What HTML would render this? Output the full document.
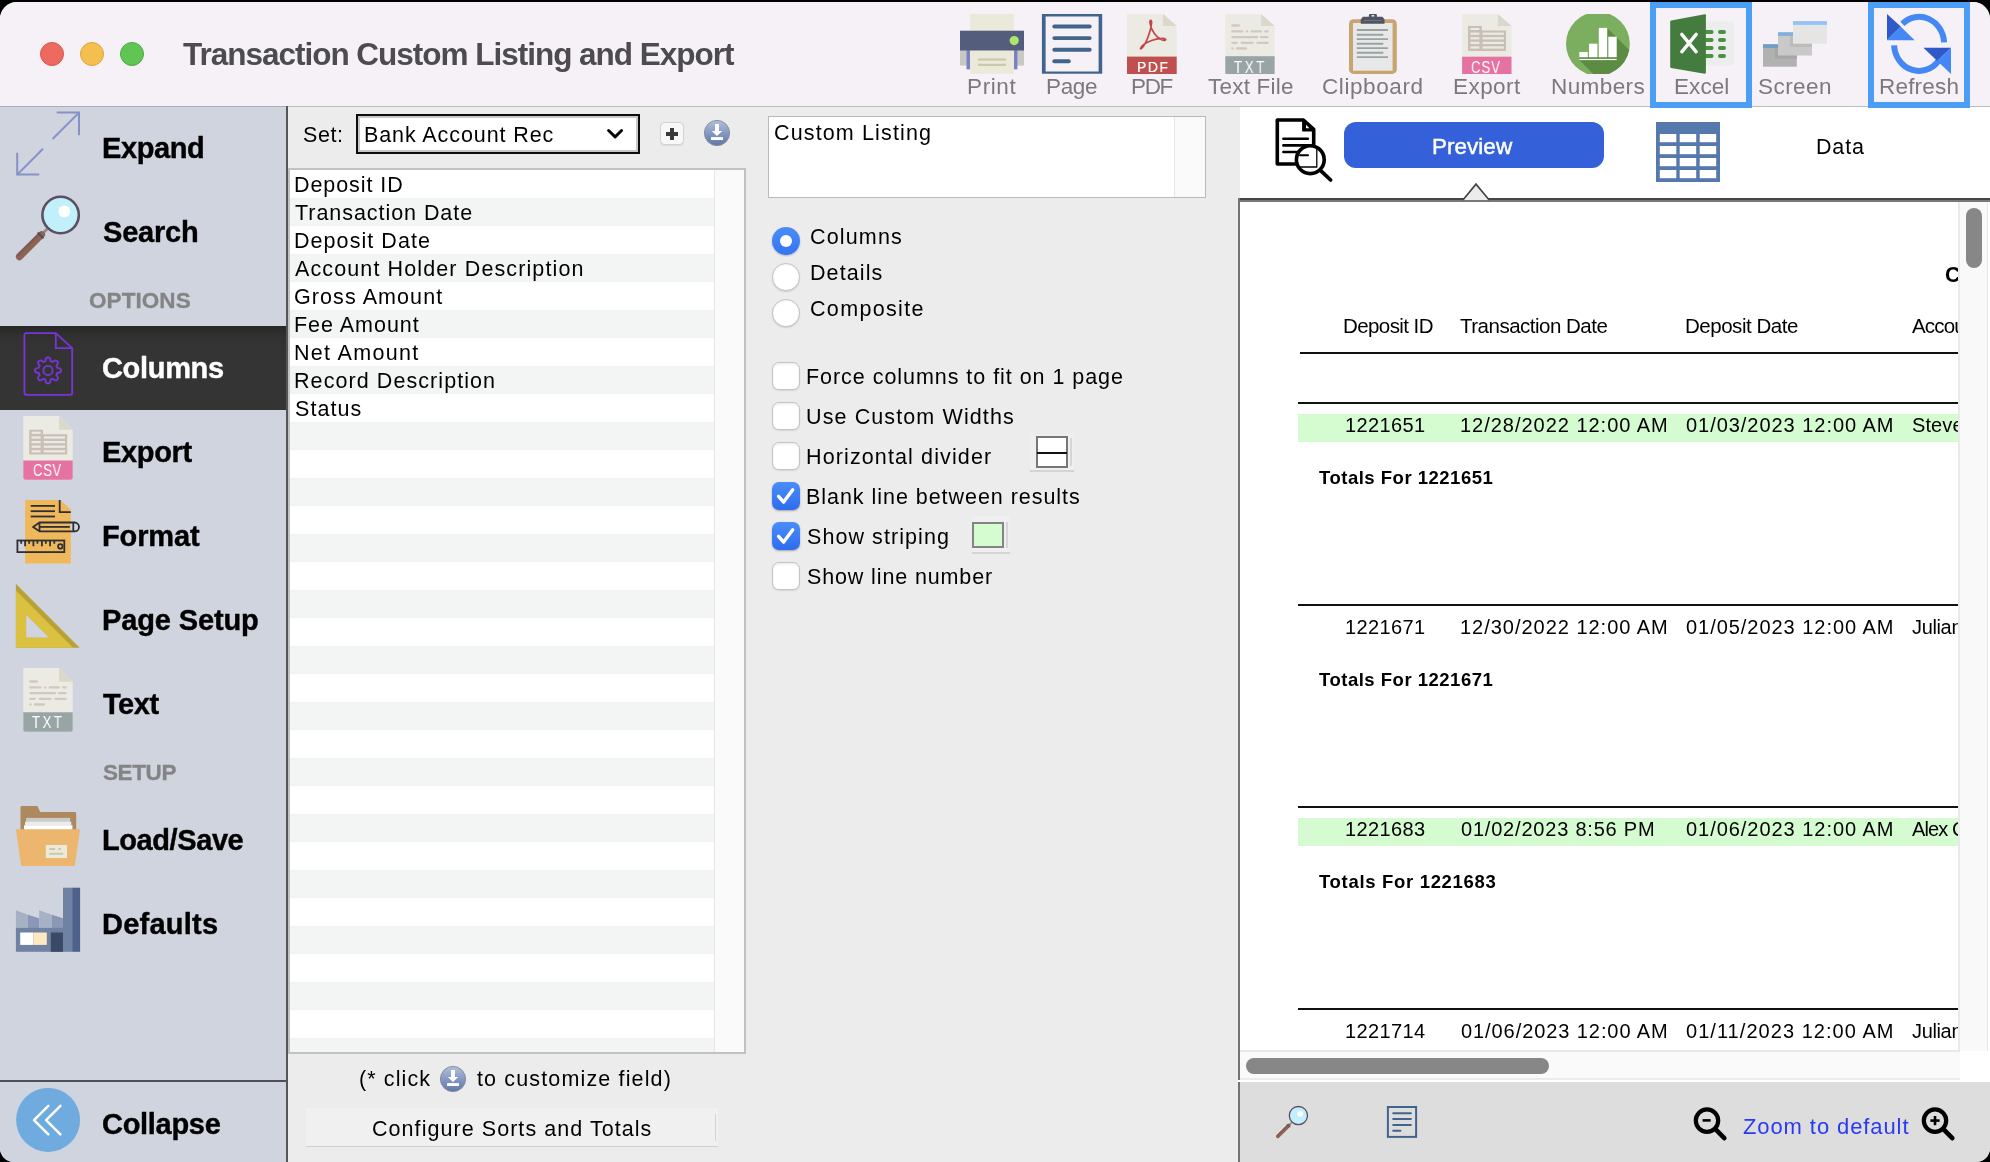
<!DOCTYPE html><html><head><meta charset="utf-8"><title>Transaction Custom Listing and Export</title><style>
*{box-sizing:border-box;margin:0;padding:0}
html,body{width:1990px;height:1162px;overflow:hidden;background:#000;font-family:"Liberation Sans",sans-serif}
#win{position:absolute;left:0;top:2px;width:1990px;height:1160px;background:#ececec;border-radius:17px 17px 14px 14px;overflow:hidden}
#pg{position:absolute;left:0;top:-2px;width:1990px;height:1162px}
.a{position:absolute}
.tx{position:absolute;white-space:nowrap;line-height:1;will-change:transform}
svg{position:absolute;overflow:visible}
.cb{left:772.2px;width:27.4px;height:27.4px;border-radius:7px;background:#fff;border:1px solid #c4c4c4;box-shadow:0 1px 1.5px rgba(0,0,0,.10), inset 0 1.5px 2px rgba(0,0,0,.07)}
.cb.on{background:linear-gradient(#4a8ef8,#2d6cef);border:0;box-shadow:0 1px 2px rgba(0,0,0,.3)}
</style></head><body>
<div id="win"><div id="pg">
<!-- ===== title bar ===== -->
<div class="a" style="left:0;top:0;width:1990px;height:106px;background:#f5f1f7"></div>
<div class="a" style="left:0;top:106px;width:1990px;height:1.2px;background:#bcbbbd"></div>
<div class="a" style="left:40px;top:42px;width:24px;height:24px;border-radius:50%;background:#ed6a5e;border:1px solid #d8564a"></div>
<div class="a" style="left:80px;top:42px;width:24px;height:24px;border-radius:50%;background:#f5bf4f;border:1px solid #dba53a"></div>
<div class="a" style="left:120px;top:42px;width:24px;height:24px;border-radius:50%;background:#61c554;border:1px solid #4daa41"></div>
<!-- toolbar highlight boxes -->
<!--TOOLBAR_ICONS_START-->
<svg style="left:0;top:0" width="1990" height="1162" viewBox="0 0 1990 1162">
<!-- PRINT -->
<g>
<rect x="970" y="14" width="44" height="17" fill="#ebe9d9"/>
<rect x="960" y="50" width="64" height="15.6" fill="#c7c9c6"/>
<rect x="966.5" y="50" width="3.5" height="19.3" fill="#7b80c4"/>
<rect x="1014" y="50" width="3.4" height="19.3" fill="#7b80c4"/>
<rect x="970" y="50" width="44" height="23.8" fill="#ebe9d9"/>
<rect x="960" y="30.7" width="64" height="19.8" fill="#555d7c"/>
<circle cx="1014.2" cy="40.6" r="4.6" fill="#abe66d"/>
<rect x="978" y="58.4" width="28" height="2.2" fill="#cdc9a8"/>
<rect x="978" y="63.8" width="28" height="2.2" fill="#cdc9a8"/>
</g>
<!-- PAGE -->
<g>
<path d="M1041.9 14H1102.2V73.8H1041.9Z M1045.6 16.4V71.6H1098.6V16.4Z" fill="#41648c" fill-rule="evenodd"/>
<g stroke="#41648c" stroke-width="3.9" stroke-linecap="round">
<line x1="1054.3" y1="26.5" x2="1089.7" y2="26.5"/>
<line x1="1054.3" y1="38.1" x2="1089.7" y2="38.1"/>
<line x1="1054.3" y1="49.7" x2="1089.7" y2="49.7"/>
<line x1="1054.3" y1="61.3" x2="1068.8" y2="61.3"/>
</g>
</g>
<!-- PDF -->
<g>
<path d="M1127 14H1163L1176.7 26V74H1127Z" fill="#ebebe3"/>
<path d="M1163 14L1176.7 26H1163Z" fill="#d9d8cb"/>
<rect x="1127" y="56.6" width="49.7" height="17.4" fill="#c0504f"/>
<path d="M1142 48 C1146 44,1151 31,1151.6 23 C1151.8 19.5,1149.6 19.5,1150 23 C1151 31,1157 38,1162 40 C1166.5 41.6,1167 38.4,1163 38.4 C1155 38.4,1147 42,1143.3 45 C1139.6 48,1140 50,1142 48Z" fill="none" stroke="#c2474a" stroke-width="1.7" stroke-linejoin="round"/>
</g>
<!-- TXT -->
<g>
<path d="M1225.3 14H1261.2L1274.6 26V74H1225.3Z" fill="#ebebe3"/>
<path d="M1261.2 14L1274.6 26H1261.2Z" fill="#d9d8cb"/>
<rect x="1225.3" y="56.2" width="49.3" height="17.8" fill="#98a5a4"/>
<g stroke="#d2c7c2" stroke-width="2.3" stroke-linecap="round">
<line x1="1232.4" y1="25.5" x2="1238.9" y2="25.5"/>
<line x1="1232.4" y1="31.4" x2="1242.3" y2="31.4"/><line x1="1247" y1="31.4" x2="1247.2" y2="31.4"/><line x1="1251.8" y1="31.4" x2="1260.8" y2="31.4"/><line x1="1265.3" y1="31.4" x2="1267.6" y2="31.4"/>
<line x1="1232.4" y1="37.1" x2="1257.1" y2="37.1"/><line x1="1261" y1="37.1" x2="1267.6" y2="37.1"/>
<line x1="1232.4" y1="42.8" x2="1236.7" y2="42.8"/><line x1="1241.7" y1="42.8" x2="1252.6" y2="42.8"/><line x1="1257.4" y1="42.8" x2="1267.6" y2="42.8"/>
<line x1="1232.4" y1="48.5" x2="1232.6" y2="48.5"/><line x1="1236.9" y1="48.5" x2="1245.9" y2="48.5"/>
</g>
</g>
<!-- CLIPBOARD -->
<g>
<rect x="1349" y="19.3" width="47.8" height="54.6" rx="4.5" fill="#c7a570"/>
<rect x="1353" y="23" width="39.6" height="47.7" fill="#e8e8e8"/>
<rect x="1368.9" y="14" width="8" height="5" rx="1" fill="#4f5563"/>
<rect x="1371.4" y="15" width="3" height="1.8" rx="0.9" fill="#e8e8ee"/>
<path d="M1362.8 16.8H1382.5L1384.5 19.4V23.8H1360.8V19.4Z" fill="#4f5563"/>
<rect x="1364" y="20" width="17.5" height="1" fill="#6e7481"/>
<g stroke="#9aa3a3" stroke-width="1.9">
<line x1="1356.8" y1="30" x2="1388" y2="30"/><line x1="1356.8" y1="34.7" x2="1383.3" y2="34.7"/>
<line x1="1356.8" y1="39.1" x2="1388" y2="39.1"/><line x1="1356.8" y1="43.7" x2="1383.3" y2="43.7"/>
<line x1="1356.8" y1="48.1" x2="1388" y2="48.1"/><line x1="1356.8" y1="52.7" x2="1383.3" y2="52.7"/>
<line x1="1356.8" y1="57.1" x2="1388" y2="57.1"/>
</g>
</g>
<!-- CSV EXPORT -->
<g id="csvicon">
<path d="M1462.1 14H1497.9L1511.5 26V74H1462.1Z" fill="#ebebe3"/>
<path d="M1497.9 14L1511.5 26H1497.9Z" fill="#d9d8cb"/>
<rect x="1462.1" y="56.7" width="49.4" height="17.3" fill="#e572a0"/>
<path d="M1468 26H1481.8V30.5H1506V51.1H1468Z" fill="#c9beb8"/>
<g fill="#ebebe3">
<rect x="1470.4" y="27.9" width="9" height="2.1"/>
<rect x="1470.4" y="32.6" width="9" height="2.2"/><rect x="1482.6" y="32.6" width="21.3" height="2.2"/>
<rect x="1470.4" y="37.2" width="9" height="2.2"/><rect x="1482.6" y="37.2" width="21.3" height="2.2"/>
<rect x="1470.4" y="41.8" width="9" height="2.2"/><rect x="1482.6" y="41.8" width="21.3" height="2.2"/>
<rect x="1470.4" y="46.4" width="9" height="2.2"/><rect x="1482.6" y="46.4" width="21.3" height="2.2"/>
</g>
</g>
<!-- NUMBERS -->
<g>
<clipPath id="ncl"><rect x="1560" y="14" width="76" height="60"/></clipPath>
<clipPath id="ncc"><circle cx="1597.9" cy="43.8" r="31.9"/></clipPath>
<g clip-path="url(#ncl)">
<circle cx="1597.9" cy="43.8" r="31.9" fill="#7bae5e"/>
<g clip-path="url(#ncc)"><path d="M1607.2 27.9L1650 70.7V95H1614.3L1579.3 60V57.2H1607.2Z" fill="#5c8c43"/></g>
</g>
<g fill="#fff">
<rect x="1579.3" y="52" width="8.5" height="5.2"/>
<rect x="1589" y="43.7" width="8.4" height="13.5"/>
<rect x="1598.8" y="27.9" width="8.4" height="29.3"/>
<rect x="1608.3" y="36.7" width="8.4" height="20.5"/>
<rect x="1579.3" y="58.9" width="37.4" height="1.2"/>
</g>
</g>
<!-- EXCEL -->
<g>
<rect x="1704" y="21.8" width="30.1" height="43.7" rx="2" fill="#eceeed"/>
<g fill="#4e9044">
<rect x="1703" y="30" width="10.6" height="4" rx="2"/><rect x="1718" y="30" width="8" height="4" rx="2"/>
<rect x="1703" y="38" width="10.6" height="4" rx="2"/><rect x="1718" y="38" width="8" height="4" rx="2"/>
<rect x="1703" y="45.9" width="10.6" height="4" rx="2"/><rect x="1718" y="45.9" width="8" height="4" rx="2"/>
<rect x="1703" y="54" width="10.6" height="4" rx="2"/><rect x="1718" y="54" width="8" height="4" rx="2"/>
</g>
<path d="M1671.2 20.5L1704.7 14.3Q1705.9 14.1 1705.9 15.3V72.6Q1705.9 73.9 1704.7 73.7L1671.2 67.9Q1670.2 67.7 1670.2 66.7V21.7Q1670.2 20.7 1671.2 20.5Z" fill="#437c3e"/>
<g stroke="#fbfbfb" stroke-width="3.4" stroke-linecap="round"><line x1="1681.8" y1="34.4" x2="1696.2" y2="51.8"/><line x1="1696.2" y1="34.4" x2="1681.8" y2="51.8"/></g>
</g>
<!-- SCREEN -->
<g>
<rect x="1763" y="44.3" width="33.8" height="22.4" fill="#b1b1b1"/>
<rect x="1763" y="44.3" width="33.8" height="3.6" fill="#6f9fc9"/>
<rect x="1775" y="48" width="21.8" height="10.5" fill="#a6a6a6"/>
<rect x="1778" y="32.3" width="34" height="23.2" fill="#c9c9c9"/>
<rect x="1778" y="32.3" width="34" height="3.6" fill="#7fb0dd"/>
<rect x="1790" y="36" width="22" height="11" fill="#bcbcbc"/>
<rect x="1793" y="21.1" width="34" height="22.6" fill="#e5e5e5"/>
<rect x="1793" y="21.1" width="34" height="3.8" fill="#93c4f5"/>
</g>
<!-- REFRESH -->
<g>
<path d="M1902.4 23.8A25 27 0 0 1 1944.1 42.3" fill="none" stroke="#4587f5" stroke-width="6"/>
<path d="M1894.1 45.3A25 27 0 0 0 1938.8 60.5" fill="none" stroke="#4587f5" stroke-width="6"/>
<path d="M1887 13.9V40.2L1900.8 26.6Z" fill="#3059c8"/>
<path d="M1887 40.2H1914.7L1900.6 26.6Z" fill="#4587f5"/>
<path d="M1923.4 47.7H1951L1937.3 61Z" fill="#3059c8"/>
<path d="M1951 47.7V74L1937.3 61Z" fill="#4587f5"/>
</g>
</svg>
<!--TOOLBAR_ICONS_END-->

<!-- ===== sidebar ===== -->
<div class="a" style="left:0;top:106px;width:286px;height:1056px;background:#d0d4de"></div>
<div class="a" style="left:0;top:106px;width:286px;height:1px;background:#a9afba"></div>
<div class="a" style="left:0;top:326px;width:286px;height:84px;background:linear-gradient(#282828,#323232 14%,#343434 30%,#343434)"></div>
<div class="a" style="left:0;top:1080px;width:286px;height:2px;background:#4f4f54"></div>
<div class="a" style="left:286px;top:106px;width:2px;height:1056px;background:#555"></div>


<!-- ===== mid panel ===== -->
<div class="a" style="left:288px;top:107px;width:952px;height:1055px;background:#ececec"></div>
<!-- select -->
<div class="a" style="left:356px;top:114px;width:284px;height:40px;background:#fff;border:2px solid #0c0c0c"></div>
<div class="a" style="left:358px;top:116px;width:280px;height:36px;border:2px solid #c8c8c8"></div>
<svg style="left:604px;top:126px" width="24" height="16" viewBox="0 0 24 16"><path d="M4.6 4.5 L11.1 10.9 L17.6 4.5" fill="none" stroke="#0a0a0a" stroke-width="3" stroke-linecap="round" stroke-linejoin="round"/></svg>
<!-- plus button -->
<div class="a" style="left:660.3px;top:122.3px;width:23.3px;height:23.1px;background:#f7f7f7;border:1px solid #d2d2d2;border-radius:4.5px;box-shadow:0 1px 1.5px rgba(0,0,0,.08)"></div>
<div class="a" style="left:666px;top:132.1px;width:12px;height:3.9px;background:#383838"></div>
<div class="a" style="left:670.1px;top:128.1px;width:3.9px;height:11.8px;background:#383838"></div>
<!-- download circle -->
<svg style="left:703px;top:119px" width="28" height="28" viewBox="0 0 28 28"><defs><linearGradient id="dg" x1="0" y1="0" x2="0" y2="1"><stop offset="0" stop-color="#b3c0db"/><stop offset="0.5" stop-color="#8499c3"/><stop offset="1" stop-color="#5d78ad"/></linearGradient></defs><circle cx="14" cy="14" r="12.6" fill="url(#dg)" stroke="#8b8e96" stroke-width="1"/><path d="M12 5.1h4v6.8h3.2L14 17.1 8.8 11.9h3.2z" fill="#fff"/><rect x="8" y="18.1" width="12" height="2.9" fill="#fff"/></svg>
<!-- list box -->
<div class="a" style="left:288px;top:168px;width:458px;height:886px;border:2px solid #c2c2c2;background:#fff;overflow:hidden">
  <div class="a" style="left:0;top:0;width:424px;height:900px;background:repeating-linear-gradient(#fff 0,#fff 28px,#f3f5f5 28px,#f3f5f5 56px)"></div>
  <div class="a" style="left:424px;top:0;width:30px;height:900px;background:#fafafa;border-left:1px solid #e6e6e6"></div>
</div>
<!-- custom listing textarea -->
<div class="a" style="left:768px;top:116px;width:438px;height:82px;background:#fff;border:1px solid #b9b9b9"></div>
<div class="a" style="left:1174px;top:117px;width:31px;height:80px;background:#fafafa;border-left:1px solid #e6e6e6"></div>
<!-- radios -->
<div class="a" style="left:772px;top:227px;width:28px;height:28px;border-radius:50%;background:linear-gradient(#4a8df8,#3275ef);box-shadow:0 1px 2px rgba(0,0,80,.22)"></div>
<div class="a" style="left:779.8px;top:234.8px;width:12.4px;height:12.4px;border-radius:50%;background:#fff"></div>
<div class="a" style="left:772px;top:263px;width:27.6px;height:27.6px;border-radius:50%;background:#fff;border:1px solid #c3c3c3;box-shadow:0 1px 1.5px rgba(0,0,0,.12), inset 0 1px 2px rgba(0,0,0,.06)"></div>
<div class="a" style="left:772px;top:299.2px;width:27.6px;height:27.6px;border-radius:50%;background:#fff;border:1px solid #c3c3c3;box-shadow:0 1px 1.5px rgba(0,0,0,.12), inset 0 1px 2px rgba(0,0,0,.06)"></div>
<!-- checkboxes -->
<div class="a cb" style="top:362.2px"></div>
<div class="a cb" style="top:402.2px"></div>
<div class="a cb" style="top:442.2px"></div>
<div class="a cb on" style="top:482.2px"></div>
<div class="a cb on" style="top:522.2px"></div>
<div class="a cb" style="top:562.2px"></div>
<svg style="left:772.2px;top:482.4px" width="27.5" height="27.5" viewBox="0 0 26 26"><path d="M6.2 13.6 L11 19 L19.6 7.4" fill="none" stroke="#fff" stroke-width="3.2" stroke-linecap="round" stroke-linejoin="round"/></svg>
<svg style="left:772.2px;top:522.4px" width="27.5" height="27.5" viewBox="0 0 26 26"><path d="M6.2 13.6 L11 19 L19.6 7.4" fill="none" stroke="#fff" stroke-width="3.2" stroke-linecap="round" stroke-linejoin="round"/></svg>
<!-- divider swatch -->
<div class="a" style="left:1030px;top:434px;width:44px;height:38px;background:#efefef;border-bottom:2px solid #d4d4d4"></div>
<div class="a" style="left:1070px;top:438px;width:2px;height:28px;background:#d6d6d6"></div>
<div class="a" style="left:1036px;top:436px;width:32px;height:32px;background:#fff;border:2px solid #777"></div>
<div class="a" style="left:1037px;top:451.5px;width:30px;height:2px;background:#111"></div>
<!-- stripe swatch -->
<div class="a" style="left:972px;top:516px;width:38px;height:38px;background:#efefef;border-bottom:2px solid #d4d4d4"></div>
<div class="a" style="left:1006px;top:522px;width:2px;height:26px;background:#d6d6d6"></div>
<div class="a" style="left:972px;top:522px;width:32px;height:26px;background:#d5fbd0;border:2px solid #848484"></div>
<!-- click-to-customize circle -->
<svg style="left:439px;top:1065px" width="28" height="28" viewBox="0 0 28 28"><circle cx="14" cy="14" r="12.6" fill="url(#dg)" stroke="#8b8e96" stroke-width="1"/><path d="M12 5.1h4v6.8h3.2L14 17.1 8.8 11.9h3.2z" fill="#fff"/><rect x="8" y="18.1" width="12" height="2.9" fill="#fff"/></svg>
<!-- configure button -->
<div class="a" style="left:306px;top:1108px;width:412px;height:39px;background:#f0f0f0;border-bottom:1.5px solid #cfcfcf"></div>
<div class="a" style="left:714.5px;top:1114px;width:1.5px;height:27px;background:#d4d4d4"></div>

<!-- ===== right panel ===== -->
<div class="a" style="left:1240px;top:107px;width:750px;height:92px;background:#fff"></div>
<div class="a" style="left:1240px;top:200px;width:750px;height:882px;background:#fff"></div>
<!-- preview button -->
<div class="a" style="left:1344px;top:122px;width:260px;height:46px;border-radius:12px;background:#3461d9"></div>
<!--RIGHT_ICONS-->
<!-- preview content -->
<div class="a" id="pv" style="left:1240px;top:201px;width:718px;height:849px;overflow:hidden;background:#fff">

<div class="a" style="left:60px;top:151px;width:700px;height:2px;background:#111"></div>
<div class="a" style="left:58px;top:201px;width:700px;height:2px;background:#111"></div>
<div class="a" style="left:58px;top:403px;width:700px;height:2px;background:#111"></div>
<div class="a" style="left:58px;top:605px;width:700px;height:2px;background:#111"></div>
<div class="a" style="left:58px;top:807px;width:700px;height:2px;background:#111"></div>
<div class="a" style="left:58px;top:213px;width:700px;height:28px;background:#d5fbd0"></div>
<div class="a" style="left:58px;top:617px;width:700px;height:28px;background:#d5fbd0"></div>
<div class="tx" id="t55" style="left:705.00px;top:64.0px;font-size:21.5px;font-weight:700;color:#000;letter-spacing:0.300px;">Custom Listing</div>
<div class="tx" id="t56" style="left:102.80px;top:115.0px;font-size:20.5px;font-weight:400;color:#000;letter-spacing:-0.579px;">Deposit ID</div>
<div class="tx" id="t57" style="left:220.20px;top:115.0px;font-size:20.5px;font-weight:400;color:#000;letter-spacing:-0.503px;">Transaction Date</div>
<div class="tx" id="t58" style="left:445.40px;top:115.0px;font-size:20.5px;font-weight:400;color:#000;letter-spacing:-0.474px;">Deposit Date</div>
<div class="tx" id="t59" style="left:672.10px;top:115.0px;font-size:20.5px;font-weight:400;color:#000;letter-spacing:-0.800px;">Account Holder Description</div>
<div class="tx" id="t60" style="left:104.60px;top:214.0px;font-size:20px;font-weight:400;color:#000;letter-spacing:0.391px;">1221651</div>
<div class="tx" id="t61" style="left:220.30px;top:214.0px;font-size:20px;font-weight:400;color:#000;letter-spacing:0.978px;">12/28/2022 12:00 AM</div>
<div class="tx" id="t62" style="left:446.40px;top:214.0px;font-size:20px;font-weight:400;color:#000;letter-spacing:0.961px;">01/03/2023 12:00 AM</div>
<div class="tx" id="t63" style="left:672.20px;top:214.0px;font-size:20px;font-weight:400;color:#000;letter-spacing:0.100px;">Steve Morales</div>
<div class="tx" id="t64" style="left:78.80px;top:268.0px;font-size:18.5px;font-weight:700;color:#000;letter-spacing:0.504px;">Totals For 1221651</div>
<div class="tx" id="t65" style="left:104.60px;top:416.0px;font-size:20px;font-weight:400;color:#000;letter-spacing:0.391px;">1221671</div>
<div class="tx" id="t66" style="left:220.30px;top:416.0px;font-size:20px;font-weight:400;color:#000;letter-spacing:0.978px;">12/30/2022 12:00 AM</div>
<div class="tx" id="t67" style="left:446.40px;top:416.0px;font-size:20px;font-weight:400;color:#000;letter-spacing:0.961px;">01/05/2023 12:00 AM</div>
<div class="tx" id="t68" style="left:672.20px;top:416.0px;font-size:20px;font-weight:400;color:#000;letter-spacing:-0.350px;">Julian Ortega</div>
<div class="tx" id="t69" style="left:78.80px;top:470.0px;font-size:18.5px;font-weight:700;color:#000;letter-spacing:0.504px;">Totals For 1221671</div>
<div class="tx" id="t70" style="left:104.60px;top:618.0px;font-size:20px;font-weight:400;color:#000;letter-spacing:0.391px;">1221683</div>
<div class="tx" id="t71" style="left:221.30px;top:618.0px;font-size:20px;font-weight:400;color:#000;letter-spacing:0.795px;">01/02/2023 8:56 PM</div>
<div class="tx" id="t72" style="left:446.40px;top:618.0px;font-size:20px;font-weight:400;color:#000;letter-spacing:0.961px;">01/06/2023 12:00 AM</div>
<div class="tx" id="t73" style="left:672.20px;top:618.0px;font-size:20px;font-weight:400;color:#000;letter-spacing:-0.900px;">Alex Carter</div>
<div class="tx" id="t74" style="left:78.80px;top:672.0px;font-size:18.5px;font-weight:700;color:#000;letter-spacing:0.681px;">Totals For 1221683</div>
<div class="tx" id="t75" style="left:104.60px;top:820.0px;font-size:20px;font-weight:400;color:#000;letter-spacing:0.391px;">1221714</div>
<div class="tx" id="t76" style="left:221.30px;top:820.0px;font-size:20px;font-weight:400;color:#000;letter-spacing:0.922px;">01/06/2023 12:00 AM</div>
<div class="tx" id="t77" style="left:446.40px;top:820.0px;font-size:20px;font-weight:400;color:#000;letter-spacing:1.044px;">01/11/2023 12:00 AM</div>
<div class="tx" id="t78" style="left:672.20px;top:820.0px;font-size:20px;font-weight:400;color:#000;letter-spacing:-0.350px;">Julian Ortega</div>
</div>
<!-- v scroll -->
<div class="a" style="left:1958px;top:202px;width:30px;height:849px;background:#f9f9f9;border-left:2px solid #e9e9e9;border-right:1px solid #e6e6e6"></div>
<div class="a" style="left:1966px;top:208px;width:16px;height:60px;border-radius:8px;background:#878787"></div>
<!-- h scroll -->
<div class="a" style="left:1240px;top:1050px;width:720px;height:30px;background:#fafafa;border-top:2px solid #e8e8e8;border-bottom:2px solid #ececec"></div>
<div class="a" style="left:1246px;top:1058px;width:303px;height:16px;border-radius:8px;background:#878787"></div>
<!-- bottom bar -->
<div class="a" style="left:1240px;top:1082px;width:750px;height:80px;background:#dddddd"></div>
<!-- tab line + triangle -->
<div class="a" style="left:1238px;top:198px;width:752px;height:2px;background:#464646"></div>
<div class="a" style="left:1238px;top:200px;width:752px;height:2px;background:#787878"></div>
<div class="a" style="left:1238px;top:198px;width:2px;height:964px;background:#737373"></div>
<div class="a" style="left:1238px;top:1080px;width:752px;height:2px;background:#fff"></div>
<svg style="left:1458px;top:180px" width="36" height="22" viewBox="0 0 36 22"><path d="M5.4 20 L18 4.4 L30.8 20Z" fill="#ececec"/><path d="M4.9 20 L18 4.2 L31.2 20" fill="none" stroke="#464646" stroke-width="1.7" stroke-linejoin="miter"/></svg>
<!--SIDEBAR_ICONS_START-->
<svg style="left:0;top:0" width="1990" height="1162" viewBox="0 0 1990 1162">
<defs>
<g id="mag">
  <!-- search magnifier, lens centre at 0,0 ; r=19.5 -->
  <line x1="-13.4" y1="14" x2="-17.6" y2="18" stroke="#8e8e96" stroke-width="3"/>
  <line x1="-19" y1="19.6" x2="-41.2" y2="41.8" stroke="#8f6350" stroke-width="7" stroke-linecap="round"/>
  <line x1="-20.6" y1="18" x2="-42.8" y2="40.2" stroke="#7b5b5c" stroke-width="2.4" stroke-linecap="round"/>
  <line x1="-23" y1="17.6" x2="-17.2" y2="23.4" stroke="#4f4a5f" stroke-width="2"/>
  <circle cx="0" cy="0" r="18.2" fill="#c1f0fb" stroke="#5a4f63" stroke-width="2.6"/>
  <circle cx="3.7" cy="-3.5" r="5.9" fill="#fff"/>
</g>
</defs>
<!-- EXPAND -->
<g fill="none" stroke="#8592c9" stroke-width="2">
<path d="M56.7 112.6H79V135.2"/><line x1="79" y1="112.6" x2="52.6" y2="139"/>
<path d="M17.2 152.8V174.6H39.2"/><line x1="17.2" y1="174.6" x2="43" y2="148.8"/>
</g>
<!-- SEARCH -->
<use href="#mag" transform="translate(60.6,215)"/>
<!-- COLUMNS icon -->
<g fill="none" stroke="#7a35d6" stroke-width="1.8" stroke-linejoin="round">
<path d="M26.4 333.2H55.8L72.2 348.2V392.8Q72.2 394.8 70.2 394.8H26.4Q24.4 394.8 24.4 392.8V335.2Q24.4 333.2 26.4 333.2Z"/>
<path d="M55.8 333.2V348.2H72.2"/>
<circle cx="48" cy="370.4" r="4.6"/>
<path d="M45.51 361.13L45.40 360.64Q45.53 357.54 48.00 357.25Q50.47 357.54 50.60 360.64L50.49 361.13A9.60 9.60 0 0 1 52.79 362.08L52.79 362.08L53.07 361.66Q55.35 359.55 57.30 361.10Q58.85 363.05 56.74 365.33L56.32 365.61A9.60 9.60 0 0 1 57.27 367.91L57.27 367.91L57.76 367.80Q60.86 367.93 61.15 370.40Q60.86 372.87 57.76 373.00L57.27 372.89A9.60 9.60 0 0 1 56.32 375.19L56.32 375.19L56.74 375.47Q58.85 377.75 57.30 379.70Q55.35 381.25 53.07 379.14L52.79 378.72A9.60 9.60 0 0 1 50.49 379.67L50.49 379.67L50.60 380.16Q50.47 383.26 48.00 383.55Q45.53 383.26 45.40 380.16L45.51 379.67A9.60 9.60 0 0 1 43.21 378.72L43.21 378.72L42.93 379.14Q40.65 381.25 38.70 379.70Q37.15 377.75 39.26 375.47L39.68 375.19A9.60 9.60 0 0 1 38.73 372.89L38.73 372.89L38.24 373.00Q35.14 372.87 34.85 370.40Q35.14 367.93 38.24 367.80L38.73 367.91A9.60 9.60 0 0 1 39.68 365.61L39.68 365.61L39.26 365.33Q37.15 363.05 38.70 361.10Q40.65 359.55 42.93 361.66L43.21 362.08A9.60 9.60 0 0 1 45.51 361.13Z"/>
</g>
<!-- CSV (sidebar) -->
<g>
<path d="M23.3 416H59.1L72.7 429.8V477.8Q72.7 479.8 70.7 479.8H25.3Q23.3 479.8 23.3 477.8Z" fill="#ebebe3"/>
<path d="M59.1 416L72.7 429.8H59.1Z" fill="#d9d8cb"/>
<path d="M23.3 460.6H72.7V477.8Q72.7 479.8 70.7 479.8H25.3Q23.3 479.8 23.3 477.8Z" fill="#e572a0"/>
<path d="M29.2 429.8H43V434.3H67.2V454.6H29.2Z" fill="#c9beb8"/>
<g fill="#ebebe3">
<rect x="31.6" y="431.7" width="9" height="2.1"/>
<rect x="31.6" y="436.4" width="9" height="2.2"/><rect x="43.8" y="436.4" width="21.3" height="2.2"/>
<rect x="31.6" y="441" width="9" height="2.2"/><rect x="43.8" y="441" width="21.3" height="2.2"/>
<rect x="31.6" y="445.6" width="9" height="2.2"/><rect x="43.8" y="445.6" width="21.3" height="2.2"/>
<rect x="31.6" y="450.2" width="9" height="2.2"/><rect x="43.8" y="450.2" width="21.3" height="2.2"/>
</g>
</g>
<!-- FORMAT -->
<g>
<path d="M25.1 499.9H60.6L70.8 509.7V563.6H25.1Z" fill="#efb95b"/>
<g fill="none" stroke="#2e2e36" stroke-width="1.8">
<path d="M59.7 499.9V512.1H70.8"/>
<line x1="30.7" y1="505.9" x2="55" y2="505.9"/><line x1="30.7" y1="511.2" x2="55" y2="511.2"/><line x1="30.7" y1="516.5" x2="55" y2="516.5"/>
<path d="M39.5 522.5H74.6A4.4 4.4 0 0 1 74.6 531.3H39.5L33 526.9Z" stroke-linejoin="round"/>
<line x1="39.5" y1="522.5" x2="39.5" y2="531.3"/>
<line x1="39.5" y1="526.9" x2="69.8" y2="526.9"/>
<line x1="73.3" y1="522.5" x2="73.3" y2="531.3"/>
<rect x="17.4" y="540.5" width="46.9" height="11.6"/>
<path d="M21.2 540.5V543.8M25.1 540.5V546.2M29.2 540.5V543.8M33.4 540.5V546.2M37.4 540.5V543.8M41.9 540.5V546.2M45.8 540.5V543.8M50.1 540.5V546.2M54.3 540.5V543.8"/>
<circle cx="60.3" cy="546.4" r="2.2"/>
</g>
</g>
<!-- PAGE SETUP -->
<g>
<path d="M15.9 583.8V647.7H79.7Z M26.1 614.4L49.4 637.7H26.1Z" fill="#b7a238" fill-rule="evenodd"/>
<path d="M15.9 590.6V647.7H73.1Z M26.1 614.4L49.4 637.7H26.1Z" fill="#dcc140" fill-rule="evenodd"/>
</g>
<!-- TEXT (sidebar) -->
<g>
<path d="M23.3 668H59.1L72.7 681.8V729.8Q72.7 731.8 70.7 731.8H25.3Q23.3 731.8 23.3 729.8Z" fill="#ebebe3"/>
<path d="M59.1 668L72.7 681.8H59.1Z" fill="#d9d8cb"/>
<path d="M23.3 712.2H72.7V729.8Q72.7 731.8 70.7 731.8H25.3Q23.3 731.8 23.3 729.8Z" fill="#98a5a4"/>
<g stroke="#d2c7c2" stroke-width="2.3" stroke-linecap="round" transform="translate(-1202,656)">
<line x1="1232.4" y1="25.5" x2="1238.9" y2="25.5"/>
<line x1="1232.4" y1="31.4" x2="1242.3" y2="31.4"/><line x1="1247" y1="31.4" x2="1247.2" y2="31.4"/><line x1="1251.8" y1="31.4" x2="1260.8" y2="31.4"/><line x1="1265.3" y1="31.4" x2="1267.6" y2="31.4"/>
<line x1="1232.4" y1="37.1" x2="1257.1" y2="37.1"/><line x1="1261" y1="37.1" x2="1267.6" y2="37.1"/>
<line x1="1232.4" y1="42.8" x2="1236.7" y2="42.8"/><line x1="1241.7" y1="42.8" x2="1252.6" y2="42.8"/><line x1="1257.4" y1="42.8" x2="1267.6" y2="42.8"/>
<line x1="1232.4" y1="48.5" x2="1232.6" y2="48.5"/><line x1="1236.9" y1="48.5" x2="1245.9" y2="48.5"/>
</g>
</g>
<!-- LOAD/SAVE -->
<g>
<path d="M20.5 806.9Q20.5 805.9 21.5 805.9H37.4L40.2 811.9H75.2Q76.2 811.9 76.2 812.9V830H20.5Z" fill="#ae8960"/>
<rect x="26.1" y="817.9" width="44" height="4" fill="#c9cccd"/>
<rect x="25.1" y="821.6" width="46.1" height="4" fill="#e8edee"/>
<rect x="24" y="825.3" width="48.4" height="4.6" fill="#fff"/>
<path d="M15.9 829.2H80.1L74.8 865.9H21.2Z" fill="#ecb66f"/>
<rect x="45.8" y="845" width="21.2" height="13" fill="#ebe9d9"/>
<g stroke="#cdc9a8" stroke-width="2"><line x1="49.4" y1="849" x2="55" y2="849"/><line x1="58.3" y1="849" x2="60.9" y2="849"/><line x1="49.4" y1="853.8" x2="63.2" y2="853.8"/></g>
</g>
<!-- DEFAULTS (factory) -->
<g>
<rect x="63" y="887.7" width="9.3" height="64.1" fill="#7082a3"/>
<rect x="72.2" y="887.7" width="7.9" height="64.1" fill="#4e618a"/>
<path d="M15.9 910.2L27.9 914.8V928H15.9Z" fill="#a6b1c6"/>
<path d="M27.9 914.8L39.2 918.3V928H27.9Z" fill="#8a98b5"/>
<path d="M39.2 910.2L51.9 914.8V928H39.2Z" fill="#a6b1c6"/>
<path d="M51.9 914.8L63 918.3V928H51.9Z" fill="#8a98b5"/>
<rect x="15.9" y="927.9" width="47.1" height="23.9" fill="#6f82a4"/>
<rect x="20.2" y="932.5" width="13.1" height="12.4" fill="#fff"/>
<rect x="33.3" y="932.5" width="13.5" height="12.4" fill="#fce9c3"/>
<rect x="50.8" y="932.5" width="12.2" height="19.3" fill="#3a4a66"/>
</g>
<!-- COLLAPSE -->
<circle cx="48.1" cy="1119.9" r="32" fill="#6fabde"/>
<g fill="none" stroke="#fff" stroke-width="2.5" stroke-linecap="round" stroke-linejoin="round">
<path d="M48.3 1105.9L34 1120.1L48.3 1134.4"/><path d="M60.4 1105.9L46.1 1120.1L60.4 1134.4"/>
</g>

<!-- ===== RIGHT PANEL ICONS ===== -->
<!-- preview doc+magnifier -->
<g fill="none" stroke="#000" stroke-linejoin="round" stroke-linecap="round">
<path d="M1277.3 120H1303.4L1313.7 129.4V164H1277.3Z" stroke-width="3.6"/>
<path d="M1303.3 120V130.4H1313.7L1303.4 120Z" fill="#000" stroke-width="2.4"/>
<path d="M1306 124.8V128.2H1309.4Z" fill="#fff" stroke="none"/>
<g stroke-width="2.6"><line x1="1283.4" y1="138.7" x2="1307.8" y2="138.7"/><line x1="1283.4" y1="145.4" x2="1307.8" y2="145.4"/><line x1="1283.4" y1="152" x2="1300" y2="152"/></g>
<circle cx="1310.3" cy="159.7" r="13.9" fill="#fff" stroke-width="3.6"/>
<line x1="1300" y1="155.2" x2="1308" y2="155.2" stroke-width="2"/>
<clipPath id="lens"><circle cx="1310.3" cy="159.7" r="13.9"/></clipPath>
<path d="M1316.8 140V167H1296" clip-path="url(#lens)" stroke-width="1.3" stroke-linecap="butt"/>
<line x1="1321" y1="170.8" x2="1330.6" y2="180" stroke-width="3.8"/>
</g>
<!-- table icon -->
<g>
<rect x="1656" y="122" width="64" height="60" fill="#5579ad"/>
<g fill="#fff">
<rect x="1659.8" y="134" width="16.5" height="8.2"/><rect x="1679.7" y="134" width="16.5" height="8.2"/><rect x="1699.7" y="134" width="16.5" height="8.2"/>
<rect x="1659.8" y="146" width="16.5" height="8.2"/><rect x="1679.7" y="146" width="16.5" height="8.2"/><rect x="1699.7" y="146" width="16.5" height="8.2"/>
<rect x="1659.8" y="158" width="16.5" height="8.2"/><rect x="1679.7" y="158" width="16.5" height="8.2"/><rect x="1699.7" y="158" width="16.5" height="8.2"/>
<rect x="1659.8" y="170" width="16.5" height="8.2"/><rect x="1679.7" y="170" width="16.5" height="8.2"/><rect x="1699.7" y="170" width="16.5" height="8.2"/>
</g>
</g>
<!-- bottom bar: small magnifier -->
<use href="#mag" transform="translate(1298.4,1115.6) scale(0.5)"/>
<!-- bottom bar: page icon -->
<g>
<rect x="1387.9" y="1107" width="28.2" height="29.9" fill="none" stroke="#41648c" stroke-width="2"/>
<g stroke="#41648c" stroke-width="1.95" stroke-linecap="round">
<line x1="1393.2" y1="1113.2" x2="1410.9" y2="1113.2"/><line x1="1393.2" y1="1119" x2="1410.9" y2="1119"/><line x1="1393.2" y1="1124.9" x2="1410.9" y2="1124.9"/><line x1="1393.2" y1="1130.8" x2="1400.4" y2="1130.8"/>
</g>
</g>
<!-- zoom out / in -->
<g fill="none" stroke="#000" stroke-linecap="round">
<circle cx="1707" cy="1120.6" r="11.2" stroke-width="4.2"/>
<line x1="1715.4" y1="1129.2" x2="1724.3" y2="1138.2" stroke-width="4.6"/>
<line x1="1702.6" y1="1120.4" x2="1710.6" y2="1120.4" stroke-width="2.6" stroke-linecap="butt"/>
<circle cx="1935" cy="1120.6" r="11.2" stroke-width="4.2"/>
<line x1="1943.4" y1="1129.2" x2="1952.3" y2="1138.2" stroke-width="4.6"/>
<line x1="1930.4" y1="1120.6" x2="1939.6" y2="1120.6" stroke-width="2.6" stroke-linecap="butt"/>
<line x1="1935" y1="1116" x2="1935" y2="1125.2" stroke-width="2.6" stroke-linecap="butt"/>
</g>
</svg>
<!--SIDEBAR_ICONS_END-->
<!-- toolbar highlight boxes -->
<div class="a" style="left:1650px;top:2px;width:102px;height:106px;border:6px solid #4a9ef6"></div>
<div class="a" style="left:1868px;top:2px;width:102px;height:106px;border:6px solid #4a9ef6"></div>

<div class="tx" id="t0" style="left:183.00px;top:39.0px;font-size:31.5px;font-weight:700;color:#4d4b50;letter-spacing:-1.016px;">Transaction Custom Listing and Export</div>
<div class="tx" id="t1" style="left:966.60px;top:76.0px;font-size:22.5px;font-weight:400;color:#7b797d;letter-spacing:0.621px;">Print</div>
<div class="tx" id="t2" style="left:1046.20px;top:76.0px;font-size:22.5px;font-weight:400;color:#7b797d;letter-spacing:-0.350px;">Page</div>
<div class="tx" id="t3" style="left:1130.50px;top:76.0px;font-size:22.5px;font-weight:400;color:#7b797d;letter-spacing:-1.378px;">PDF</div>
<div class="tx" id="t4" style="left:1208.00px;top:76.0px;font-size:22.5px;font-weight:400;color:#7b797d;letter-spacing:0.217px;">Text File</div>
<div class="tx" id="t5" style="left:1321.80px;top:76.0px;font-size:22.5px;font-weight:400;color:#7b797d;letter-spacing:0.588px;">Clipboard</div>
<div class="tx" id="t6" style="left:1452.80px;top:76.0px;font-size:22.5px;font-weight:400;color:#7b797d;letter-spacing:0.444px;">Export</div>
<div class="tx" id="t7" style="left:1551.00px;top:76.0px;font-size:22.5px;font-weight:400;color:#7b797d;letter-spacing:0.411px;">Numbers</div>
<div class="tx" id="t8" style="left:1674.00px;top:76.0px;font-size:22.5px;font-weight:400;color:#7b797d;letter-spacing:0.067px;">Excel</div>
<div class="tx" id="t9" style="left:1757.70px;top:76.0px;font-size:22.5px;font-weight:400;color:#7b797d;letter-spacing:0.443px;">Screen</div>
<div class="tx" id="t10" style="left:1879.00px;top:76.0px;font-size:22.5px;font-weight:400;color:#7b797d;letter-spacing:0.203px;">Refresh</div>
<div class="tx" id="t11" style="left:1136.60px;top:59.0px;font-size:15.5px;font-weight:400;color:#fff;letter-spacing:1.623px;transform:scaleX(0.9);transform-origin:0 0;text-shadow:0 0 .5px #fff;">PDF</div>
<div class="tx" id="t12" style="left:1234.00px;top:59.0px;font-size:16.5px;font-weight:400;color:#fff;letter-spacing:3.391px;transform:scaleX(0.8);transform-origin:0 0;">TXT</div>
<div class="tx" id="t13" style="left:1471.30px;top:59.0px;font-size:16.5px;font-weight:400;color:#fff;letter-spacing:1.159px;transform:scaleX(0.8);transform-origin:0 0;">CSV</div>
<div class="tx" id="t14" style="left:32.70px;top:462.0px;font-size:16.5px;font-weight:400;color:#fff;letter-spacing:0.721px;transform:scaleX(0.8);transform-origin:0 0;">CSV</div>
<div class="tx" id="t15" style="left:32.20px;top:714.0px;font-size:16.5px;font-weight:400;color:#fff;letter-spacing:3.078px;transform:scaleX(0.8);transform-origin:0 0;">TXT</div>
<div class="tx" id="t16" style="left:102.00px;top:134.0px;font-size:29px;font-weight:700;color:#000;letter-spacing:-0.407px;-webkit-text-stroke:0.4px #000;">Expand</div>
<div class="tx" id="t17" style="left:103.00px;top:218.0px;font-size:29px;font-weight:700;color:#000;letter-spacing:-0.204px;-webkit-text-stroke:0.4px #000;">Search</div>
<div class="tx" id="t18" style="left:88.80px;top:290.0px;font-size:22.5px;font-weight:700;color:#848484;letter-spacing:0.074px;-webkit-text-stroke:0.3px #848484;">OPTIONS</div>
<div class="tx" id="t19" style="left:101.50px;top:354.0px;font-size:29px;font-weight:700;color:#fff;letter-spacing:-0.322px;-webkit-text-stroke:0.4px #fff;">Columns</div>
<div class="tx" id="t20" style="left:102.20px;top:438.0px;font-size:29px;font-weight:700;color:#000;letter-spacing:-0.337px;-webkit-text-stroke:0.4px #000;">Export</div>
<div class="tx" id="t21" style="left:102.20px;top:522.0px;font-size:29px;font-weight:700;color:#000;letter-spacing:-0.128px;-webkit-text-stroke:0.4px #000;">Format</div>
<div class="tx" id="t22" style="left:102.20px;top:606.0px;font-size:29px;font-weight:700;color:#000;letter-spacing:-0.136px;-webkit-text-stroke:0.4px #000;">Page Setup</div>
<div class="tx" id="t23" style="left:103.20px;top:690.0px;font-size:29px;font-weight:700;color:#000;letter-spacing:-0.476px;-webkit-text-stroke:0.4px #000;">Text</div>
<div class="tx" id="t24" style="left:102.80px;top:762.0px;font-size:22.5px;font-weight:700;color:#848484;letter-spacing:-0.402px;-webkit-text-stroke:0.3px #848484;">SETUP</div>
<div class="tx" id="t25" style="left:101.80px;top:826.0px;font-size:29px;font-weight:700;color:#000;letter-spacing:-0.417px;-webkit-text-stroke:0.4px #000;">Load/Save</div>
<div class="tx" id="t26" style="left:101.80px;top:910.0px;font-size:29px;font-weight:700;color:#000;letter-spacing:0.244px;-webkit-text-stroke:0.4px #000;">Defaults</div>
<div class="tx" id="t27" style="left:101.80px;top:1110.0px;font-size:29px;font-weight:700;color:#000;letter-spacing:-0.292px;-webkit-text-stroke:0.4px #000;">Collapse</div>
<div class="tx" id="t28" style="left:302.70px;top:125.0px;font-size:21.5px;font-weight:400;color:#000;letter-spacing:0.574px;">Set:</div>
<div class="tx" id="t29" style="left:364.00px;top:125.0px;font-size:21.5px;font-weight:400;color:#000;letter-spacing:0.911px;">Bank Account Rec</div>
<div class="tx" id="t30" style="left:294.00px;top:175.0px;font-size:21.5px;font-weight:400;color:#000;letter-spacing:0.928px;">Deposit ID</div>
<div class="tx" id="t31" style="left:295.00px;top:203.0px;font-size:21.5px;font-weight:400;color:#000;letter-spacing:0.949px;">Transaction Date</div>
<div class="tx" id="t32" style="left:294.00px;top:231.0px;font-size:21.5px;font-weight:400;color:#000;letter-spacing:1.060px;">Deposit Date</div>
<div class="tx" id="t33" style="left:295.00px;top:259.0px;font-size:21.5px;font-weight:400;color:#000;letter-spacing:1.118px;">Account Holder Description</div>
<div class="tx" id="t34" style="left:294.00px;top:287.0px;font-size:21.5px;font-weight:400;color:#000;letter-spacing:1.085px;">Gross Amount</div>
<div class="tx" id="t35" style="left:294.00px;top:315.0px;font-size:21.5px;font-weight:400;color:#000;letter-spacing:0.982px;">Fee Amount</div>
<div class="tx" id="t36" style="left:294.00px;top:343.0px;font-size:21.5px;font-weight:400;color:#000;letter-spacing:1.314px;">Net Amount</div>
<div class="tx" id="t37" style="left:294.00px;top:371.0px;font-size:21.5px;font-weight:400;color:#000;letter-spacing:1.072px;">Record Description</div>
<div class="tx" id="t38" style="left:295.00px;top:399.0px;font-size:21.5px;font-weight:400;color:#000;letter-spacing:1.079px;">Status</div>
<div class="tx" id="t39" style="left:774.00px;top:123.0px;font-size:21.5px;font-weight:400;color:#000;letter-spacing:1.135px;">Custom Listing</div>
<div class="tx" id="t40" style="left:809.50px;top:227.0px;font-size:21.5px;font-weight:400;color:#000;letter-spacing:1.151px;">Columns</div>
<div class="tx" id="t41" style="left:809.50px;top:263.0px;font-size:21.5px;font-weight:400;color:#000;letter-spacing:1.089px;">Details</div>
<div class="tx" id="t42" style="left:809.50px;top:299.0px;font-size:21.5px;font-weight:400;color:#000;letter-spacing:1.336px;">Composite</div>
<div class="tx" id="t43" style="left:805.50px;top:367.0px;font-size:21.5px;font-weight:400;color:#000;letter-spacing:0.957px;">Force columns to fit on 1 page</div>
<div class="tx" id="t44" style="left:805.50px;top:407.0px;font-size:21.5px;font-weight:400;color:#000;letter-spacing:1.111px;">Use Custom Widths</div>
<div class="tx" id="t45" style="left:805.50px;top:447.0px;font-size:21.5px;font-weight:400;color:#000;letter-spacing:1.121px;">Horizontal divider</div>
<div class="tx" id="t46" style="left:805.50px;top:487.0px;font-size:21.5px;font-weight:400;color:#000;letter-spacing:0.959px;">Blank line between results</div>
<div class="tx" id="t47" style="left:806.50px;top:527.0px;font-size:21.5px;font-weight:400;color:#000;letter-spacing:1.073px;">Show striping</div>
<div class="tx" id="t48" style="left:806.50px;top:567.0px;font-size:21.5px;font-weight:400;color:#000;letter-spacing:0.870px;">Show line number</div>
<div class="tx" id="t49" style="left:359.00px;top:1069.0px;font-size:21.5px;font-weight:400;color:#000;letter-spacing:1.105px;">(* click</div>
<div class="tx" id="t50" style="left:476.70px;top:1069.0px;font-size:21.5px;font-weight:400;color:#000;letter-spacing:1.144px;">to customize field)</div>
<div class="tx" id="t51" style="left:372.00px;top:1119.0px;font-size:21.5px;font-weight:400;color:#000;letter-spacing:1.055px;">Configure Sorts and Totals</div>
<div class="tx" id="t52" style="left:1432.40px;top:136.0px;font-size:22.5px;font-weight:400;color:#fff;letter-spacing:0.020px;-webkit-text-stroke:0.45px #fff;">Preview</div>
<div class="tx" id="t53" style="left:1815.70px;top:137.0px;font-size:21.5px;font-weight:400;color:#000;letter-spacing:0.845px;">Data</div>
<div class="tx" id="t54" style="left:1742.80px;top:1116.0px;font-size:22px;font-weight:400;color:#2a3af2;letter-spacing:0.903px;">Zoom to default</div>
</div></div></body></html>
